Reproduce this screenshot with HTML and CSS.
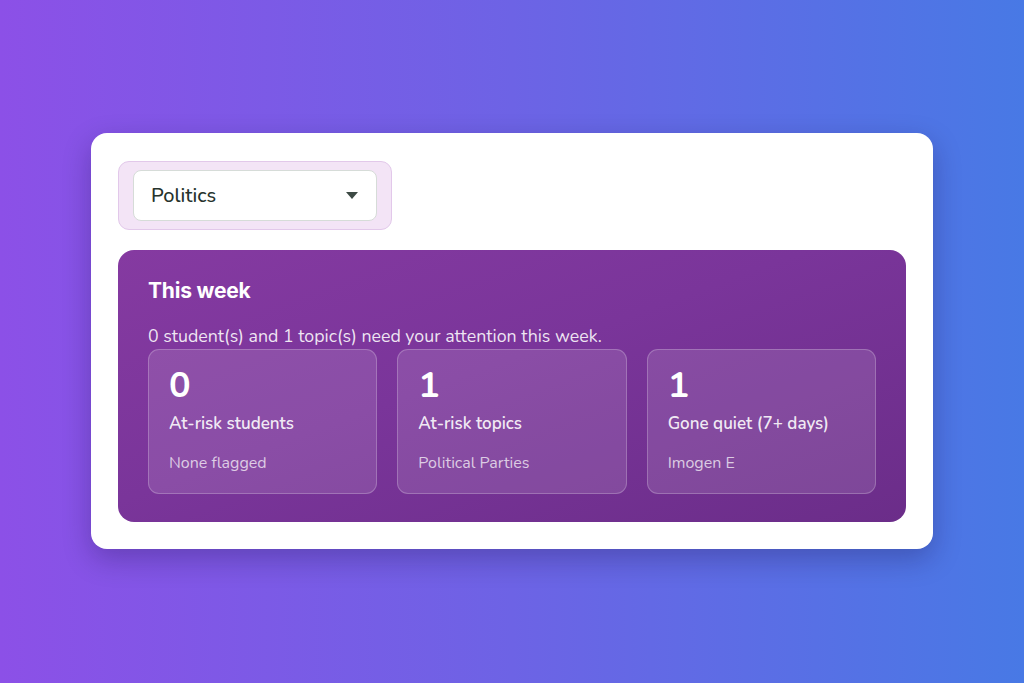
FILE: index.html
```html
<!DOCTYPE html>
<html lang="en">
<head>
    <meta charset="UTF-8">
    <meta name="viewport" content="width=device-width, initial-scale=1.0">
    <title>Weekly overview</title>
    <link rel="stylesheet" href="styles.css">
</head>
<body>
    <div class="card">
        <div class="select-wrap">
            <div class="subject-select">
                <span>Politics</span>
                <span class="caret"></span>
            </div>
        </div>

        <!-- Weekly summary -->
        <div class="week-panel">
            <h2>This week</h2>
            <p class="summary">0 student(s) and 1 topic(s) need your attention this week.</p>
            <div class="stats">
                <div class="stat">
                    <div class="stat-num">0</div>
                    <div class="stat-label">At-risk students</div>
                    <div class="stat-detail">None flagged</div>
                </div>
                <div class="stat">
                    <div class="stat-num">1</div>
                    <div class="stat-label">At-risk topics</div>
                    <div class="stat-detail">Political Parties</div>
                </div>
                <div class="stat">
                    <div class="stat-num">1</div>
                    <div class="stat-label">Gone quiet (7+ days)</div>
                    <div class="stat-detail">Imogen E</div>
                </div>
            </div>
        </div>
    </div>
</body>
</html>
```

FILE: styles.css
```css
html, body {
    height: 100%;
}
body {
    margin: 0;
    font-family: 'Nunito', 'Lato', sans-serif;
    background: linear-gradient(90deg, #8c50e7 0%, #6d63e5 50%, #4879e5 100%);
    display: flex;
    justify-content: center;
    align-items: flex-start;
}
.card {
    margin-top: 133px;
    width: 842px;
    box-sizing: border-box;
    padding: 28px 27px 27px 27px;
    background: #fff;
    border-radius: 16px;
    box-shadow: 0 10px 28px rgba(20, 10, 60, 0.28);
}
.select-wrap {
    display: inline-block;
    padding: 8px 14px;
    background: #f3e4f6;
    border: 1px solid #e2c8ea;
    border-radius: 11px;
}
.subject-select {
    width: 244px;
    height: 51px;
    box-sizing: border-box;
    padding: 0 18px 0 17px;
    display: flex;
    align-items: center;
    justify-content: space-between;
    background: #fff;
    border: 1px solid #d6dcd8;
    border-radius: 8px;
    font-size: 20px;
    font-weight: 500;
    color: #26332c;
}
.caret {
    width: 0;
    height: 0;
    border-left: 6px solid transparent;
    border-right: 6px solid transparent;
    border-top: 7px solid #3d4a44;
}
.week-panel {
    margin-top: 20px;
    padding: 28px 30px 28px 30px;
    border-radius: 16px;
    background: linear-gradient(160deg, #853aa1 0%, #7a359a 45%, #6b2d89 100%);
    color: #fff;
}
.week-panel h2 {
    margin: 0;
    font-family: 'Inter', sans-serif;
    font-size: 21px;
    font-weight: 700;
    line-height: 26px;
    letter-spacing: -0.2px;
}
.summary {
    margin: 20px 0 1px 0;
    font-size: 17.8px;
    line-height: 24px;
    color: rgba(255, 255, 255, 0.88);
}
.stats {
    display: grid;
    grid-template-columns: repeat(3, 1fr);
    gap: 20px;
}
.stat {
    height: 145px;
    box-sizing: border-box;
    padding: 14px 20px;
    background: rgba(255, 255, 255, 0.12);
    border: 1px solid rgba(255, 255, 255, 0.22);
    border-radius: 11px;
}
.stat-num {
    font-size: 36px;
    font-weight: 700;
    line-height: 44px;
}
.stat-label {
    margin-top: 4px;
    font-size: 17px;
    font-weight: 600;
    line-height: 24px;
    color: rgba(255, 255, 255, 0.9);
}
.stat-detail {
    margin-top: 15px;
    font-size: 16px;
    line-height: 24px;
    color: rgba(255, 255, 255, 0.72);
}
```
